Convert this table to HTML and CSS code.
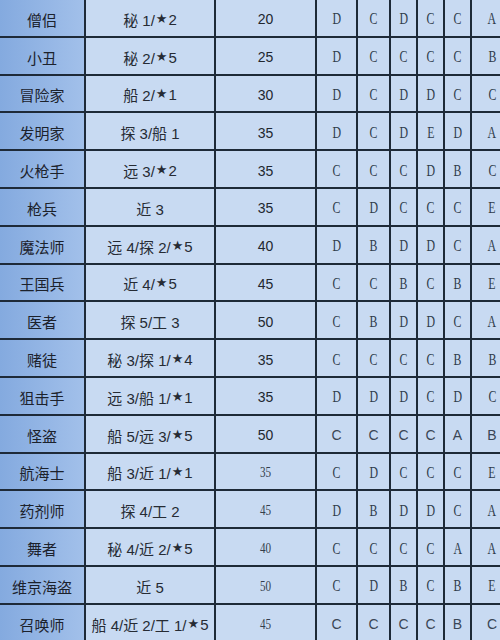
FILE: index.html
```html
<!DOCTYPE html>
<html lang="zh">
<head>
<meta charset="utf-8">
<title>职业表</title>
<link rel="stylesheet" href="styles.css">
</head>
<body>
<div class="sheet">
  <div class="row"><div class="c name">僧侣</div><div class="c req">秘 1/<span class="star">★</span>2</div><div class="c num">20</div><div class="c g"><span>D</span></div><div class="c g"><span>C</span></div><div class="c g"><span>D</span></div><div class="c g"><span>C</span></div><div class="c g"><span>C</span></div><div class="c g"><span>A</span></div></div>
  <div class="row"><div class="c name">小丑</div><div class="c req">秘 2/<span class="star">★</span>5</div><div class="c num">25</div><div class="c g"><span>D</span></div><div class="c g"><span>C</span></div><div class="c g"><span>C</span></div><div class="c g"><span>C</span></div><div class="c g"><span>C</span></div><div class="c g"><span>B</span></div></div>
  <div class="row"><div class="c name">冒险家</div><div class="c req">船 2/<span class="star">★</span>1</div><div class="c num">30</div><div class="c g"><span>D</span></div><div class="c g"><span>C</span></div><div class="c g"><span>D</span></div><div class="c g"><span>D</span></div><div class="c g"><span>C</span></div><div class="c g"><span>C</span></div></div>
  <div class="row"><div class="c name">发明家</div><div class="c req">探 3/船 1</div><div class="c num">35</div><div class="c g"><span>D</span></div><div class="c g"><span>C</span></div><div class="c g"><span>D</span></div><div class="c g"><span>E</span></div><div class="c g"><span>D</span></div><div class="c g"><span>A</span></div></div>
  <div class="row"><div class="c name">火枪手</div><div class="c req">远 3/<span class="star">★</span>2</div><div class="c num">35</div><div class="c g"><span>C</span></div><div class="c g"><span>C</span></div><div class="c g"><span>C</span></div><div class="c g"><span>D</span></div><div class="c g"><span>B</span></div><div class="c g"><span>C</span></div></div>
  <div class="row"><div class="c name">枪兵</div><div class="c req">近 3</div><div class="c num">35</div><div class="c g"><span>C</span></div><div class="c g"><span>D</span></div><div class="c g"><span>C</span></div><div class="c g"><span>C</span></div><div class="c g"><span>C</span></div><div class="c g"><span>E</span></div></div>
  <div class="row"><div class="c name">魔法师</div><div class="c req">远 4/探 2/<span class="star">★</span>5</div><div class="c num">40</div><div class="c g"><span>D</span></div><div class="c g"><span>B</span></div><div class="c g"><span>D</span></div><div class="c g"><span>D</span></div><div class="c g"><span>C</span></div><div class="c g"><span>A</span></div></div>
  <div class="row"><div class="c name">王国兵</div><div class="c req">近 4/<span class="star">★</span>5</div><div class="c num">45</div><div class="c g"><span>C</span></div><div class="c g"><span>C</span></div><div class="c g"><span>B</span></div><div class="c g"><span>C</span></div><div class="c g"><span>B</span></div><div class="c g"><span>E</span></div></div>
  <div class="row"><div class="c name">医者</div><div class="c req">探 5/工 3</div><div class="c num">50</div><div class="c g"><span>C</span></div><div class="c g"><span>B</span></div><div class="c g"><span>D</span></div><div class="c g"><span>D</span></div><div class="c g"><span>C</span></div><div class="c g"><span>A</span></div></div>
  <div class="row"><div class="c name">赌徒</div><div class="c req">秘 3/探 1/<span class="star">★</span>4</div><div class="c num">35</div><div class="c g"><span>C</span></div><div class="c g"><span>C</span></div><div class="c g"><span>C</span></div><div class="c g"><span>C</span></div><div class="c g"><span>B</span></div><div class="c g"><span>B</span></div></div>
  <div class="row"><div class="c name">狙击手</div><div class="c req">远 3/船 1/<span class="star">★</span>1</div><div class="c num">35</div><div class="c g"><span>D</span></div><div class="c g"><span>D</span></div><div class="c g"><span>D</span></div><div class="c g"><span>C</span></div><div class="c g"><span>D</span></div><div class="c g"><span>C</span></div></div>
  <div class="row"><div class="c name">怪盗</div><div class="c req">船 5/远 3/<span class="star">★</span>5</div><div class="c num">50</div><div class="c g sans"><span>C</span></div><div class="c g sans"><span>C</span></div><div class="c g sans"><span>C</span></div><div class="c g sans"><span>C</span></div><div class="c g sans"><span>A</span></div><div class="c g sans"><span>B</span></div></div>
  <div class="row"><div class="c name">航海士</div><div class="c req">船 3/近 1/<span class="star">★</span>1</div><div class="c num thin"><span>35</span></div><div class="c g"><span>C</span></div><div class="c g"><span>D</span></div><div class="c g"><span>C</span></div><div class="c g"><span>C</span></div><div class="c g"><span>C</span></div><div class="c g"><span>E</span></div></div>
  <div class="row"><div class="c name">药剂师</div><div class="c req">探 4/工 2</div><div class="c num thin"><span>45</span></div><div class="c g"><span>D</span></div><div class="c g"><span>B</span></div><div class="c g"><span>D</span></div><div class="c g"><span>D</span></div><div class="c g"><span>C</span></div><div class="c g"><span>A</span></div></div>
  <div class="row"><div class="c name">舞者</div><div class="c req">秘 4/近 2/<span class="star">★</span>5</div><div class="c num thin"><span>40</span></div><div class="c g"><span>C</span></div><div class="c g"><span>C</span></div><div class="c g"><span>C</span></div><div class="c g"><span>C</span></div><div class="c g"><span>A</span></div><div class="c g"><span>A</span></div></div>
  <div class="row"><div class="c name">维京海盗</div><div class="c req">近 5</div><div class="c num thin"><span>50</span></div><div class="c g"><span>C</span></div><div class="c g"><span>D</span></div><div class="c g"><span>B</span></div><div class="c g"><span>C</span></div><div class="c g"><span>B</span></div><div class="c g"><span>E</span></div></div>
  <div class="row"><div class="c name">召唤师</div><div class="c req">船 4/近 2/工 1/<span class="star">★</span>5</div><div class="c num thin"><span>45</span></div><div class="c g sans"><span>C</span></div><div class="c g sans"><span>C</span></div><div class="c g sans"><span>C</span></div><div class="c g sans"><span>C</span></div><div class="c g sans"><span>B</span></div><div class="c g sans"><span>C</span></div></div>
</div>
</body>
</html>
```

FILE: styles.css
```css
html, body {
  margin: 0;
  padding: 0;
  background: #c8daf2;
  overflow: hidden;
}

.sheet {
  display: grid;
  grid-template-columns: 84px 128px 99px 39px 31px 25px 25px 25px 40px;
  grid-auto-rows: 35.8px;
  gap: 2px;
  background: #1e2a38;
  width: max-content;
  padding-bottom: 2px;
}

.row {
  display: contents;
}

.c {
  display: flex;
  align-items: center;
  justify-content: center;
  background: #c8daf2;
  padding-top: 3px;
  box-sizing: border-box;
  white-space: nowrap;
}

.name {
  background: linear-gradient(to right, #84aadf, #a2c0ea);
  font-family: "Noto Sans CJK SC", "Liberation Sans", sans-serif;
  font-size: 15px;
  color: #1c222c;
}

.req {
  font-family: "Liberation Sans", "Noto Sans CJK SC", sans-serif;
  font-size: 15px;
  color: #262b34;
}

.star {
  font-family: "DejaVu Sans", sans-serif;
  font-size: 13px;
  margin: 0 1px;
  position: relative;
  top: -1px;
}

.num {
  font-family: "Liberation Sans", sans-serif;
  font-size: 14px;
  color: #22272f;
}

.num.thin span,
.g span {
  display: inline-block;
  font-family: "Liberation Serif", "DejaVu Serif", serif;
  transform: scaleX(0.74);
}

.num.thin {
  font-size: 15px;
  color: #343e4c;
}

.g {
  font-size: 16px;
  color: #303c4b;
}

.g.sans span {
  font-family: "Liberation Sans", sans-serif;
  font-size: 14px;
  transform: none;
  color: #3a4656;
}
```
